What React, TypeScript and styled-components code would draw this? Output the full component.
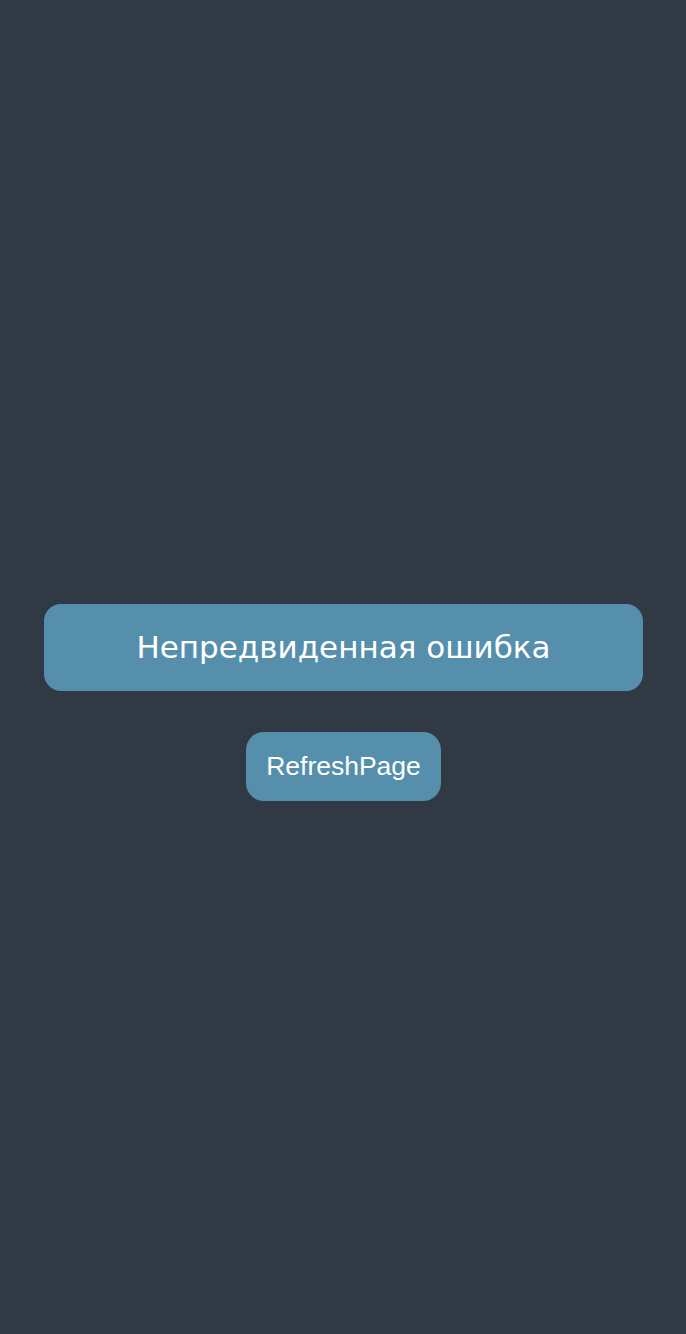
import styled, { createGlobalStyle } from 'styled-components'

const GlobalStyle = createGlobalStyle`
  html, body {
    margin: 0;
    padding: 0;
    background: #313a44;
  }
  * {
    box-sizing: border-box;
  }
`

const Page = styled.div`
  min-height: 100vh;
  display: flex;
  flex-direction: column;
  align-items: center;
  justify-content: center;
  gap: 41px;
  padding: 70px 43px 0 44px;
`

const ErrorBanner = styled.div`
  width: 100%;
  height: 87px;
  display: flex;
  align-items: center;
  justify-content: center;
  background-color: #558fac;
  border-radius: 17px;
  color: #ffffff;
  font-family: 'DejaVu Sans', Verdana, sans-serif;
  font-size: 31px;
`

const RefreshButton = styled.button`
  cursor: pointer;
  border: none;
  height: 69px;
  padding: 0 20px;
  background-color: #558fac;
  border-radius: 18px;
  color: #ffffff;
  font-family: 'Liberation Sans', Arial, sans-serif;
  font-size: 26.5px;
`

const App = () => {
  return (
    <>
      <GlobalStyle />
      <Page>
        <ErrorBanner>Непредвиденная ошибка</ErrorBanner>
        <RefreshButton onClick={() => window.location.reload()}>
          RefreshPage
        </RefreshButton>
      </Page>
    </>
  )
}

export default App
